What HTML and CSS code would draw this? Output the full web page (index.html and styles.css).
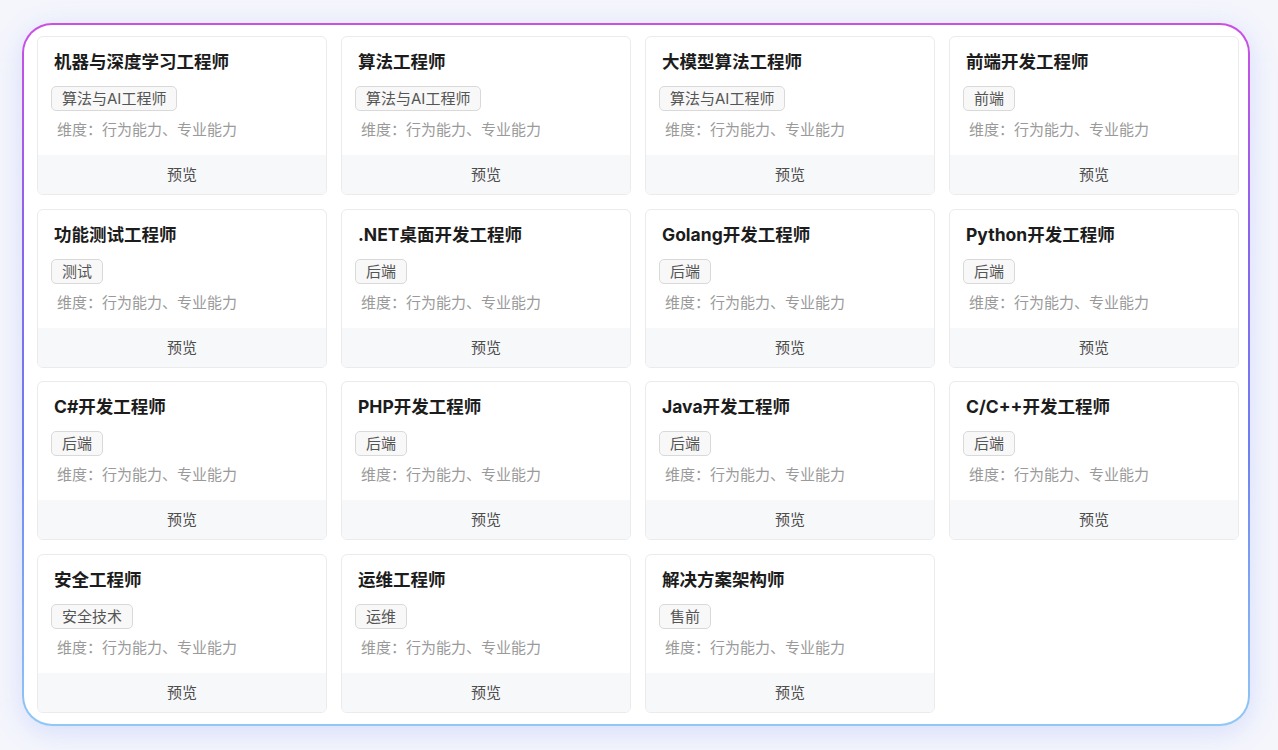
FILE: index.html
```html
<!DOCTYPE html>
<html lang="zh-CN">
<head>
  <meta charset="UTF-8">
  <title>岗位模板</title>
  <link rel="stylesheet" href="styles.css">
</head>
<body>
  <div class="panel">
    <div class="grid">
      <div class="card">
        <div class="card-body">
          <div class="card-title">机器与深度学习工程师</div>
          <span class="tag">算法与AI工程师</span>
          <div class="dims">维度：行为能力、专业能力</div>
        </div>
        <div class="card-foot">预览</div>
      </div>
      <div class="card">
        <div class="card-body">
          <div class="card-title">算法工程师</div>
          <span class="tag">算法与AI工程师</span>
          <div class="dims">维度：行为能力、专业能力</div>
        </div>
        <div class="card-foot">预览</div>
      </div>
      <div class="card">
        <div class="card-body">
          <div class="card-title">大模型算法工程师</div>
          <span class="tag">算法与AI工程师</span>
          <div class="dims">维度：行为能力、专业能力</div>
        </div>
        <div class="card-foot">预览</div>
      </div>
      <div class="card">
        <div class="card-body">
          <div class="card-title">前端开发工程师</div>
          <span class="tag">前端</span>
          <div class="dims">维度：行为能力、专业能力</div>
        </div>
        <div class="card-foot">预览</div>
      </div>

      <div class="card">
        <div class="card-body">
          <div class="card-title">功能测试工程师</div>
          <span class="tag">测试</span>
          <div class="dims">维度：行为能力、专业能力</div>
        </div>
        <div class="card-foot">预览</div>
      </div>
      <div class="card">
        <div class="card-body">
          <div class="card-title">.NET桌面开发工程师</div>
          <span class="tag">后端</span>
          <div class="dims">维度：行为能力、专业能力</div>
        </div>
        <div class="card-foot">预览</div>
      </div>
      <div class="card">
        <div class="card-body">
          <div class="card-title">Golang开发工程师</div>
          <span class="tag">后端</span>
          <div class="dims">维度：行为能力、专业能力</div>
        </div>
        <div class="card-foot">预览</div>
      </div>
      <div class="card">
        <div class="card-body">
          <div class="card-title">Python开发工程师</div>
          <span class="tag">后端</span>
          <div class="dims">维度：行为能力、专业能力</div>
        </div>
        <div class="card-foot">预览</div>
      </div>

      <div class="card">
        <div class="card-body">
          <div class="card-title">C#开发工程师</div>
          <span class="tag">后端</span>
          <div class="dims">维度：行为能力、专业能力</div>
        </div>
        <div class="card-foot">预览</div>
      </div>
      <div class="card">
        <div class="card-body">
          <div class="card-title">PHP开发工程师</div>
          <span class="tag">后端</span>
          <div class="dims">维度：行为能力、专业能力</div>
        </div>
        <div class="card-foot">预览</div>
      </div>
      <div class="card">
        <div class="card-body">
          <div class="card-title">Java开发工程师</div>
          <span class="tag">后端</span>
          <div class="dims">维度：行为能力、专业能力</div>
        </div>
        <div class="card-foot">预览</div>
      </div>
      <div class="card">
        <div class="card-body">
          <div class="card-title">C/C++开发工程师</div>
          <span class="tag">后端</span>
          <div class="dims">维度：行为能力、专业能力</div>
        </div>
        <div class="card-foot">预览</div>
      </div>

      <div class="card">
        <div class="card-body">
          <div class="card-title">安全工程师</div>
          <span class="tag">安全技术</span>
          <div class="dims">维度：行为能力、专业能力</div>
        </div>
        <div class="card-foot">预览</div>
      </div>
      <div class="card">
        <div class="card-body">
          <div class="card-title">运维工程师</div>
          <span class="tag">运维</span>
          <div class="dims">维度：行为能力、专业能力</div>
        </div>
        <div class="card-foot">预览</div>
      </div>
      <div class="card">
        <div class="card-body">
          <div class="card-title">解决方案架构师</div>
          <span class="tag">售前</span>
          <div class="dims">维度：行为能力、专业能力</div>
        </div>
        <div class="card-foot">预览</div>
      </div>
    </div>
  </div>
</body>
</html>
```

FILE: styles.css
```css
html, body {
  margin: 0;
  padding: 0;
  background: #f5f6fc;
  width: 100%;
  height: 100%;
  overflow: hidden;
}

body {
  padding: 23px 0 0 22px;
  box-sizing: border-box;
  font-family: "Inter", "Noto Sans CJK SC", sans-serif;
}

.panel {
  width: 1228px;
  height: 703px;
  box-sizing: border-box;
  padding: 11px 9px 12px 13px;
  border: 2px solid transparent;
  border-radius: 30px;
  background:
    linear-gradient(#ffffff, #ffffff) padding-box,
    linear-gradient(180deg, #cc4fe4 0%, #8a63ee 30%, #6d7ff2 60%, #90c8f6 100%) border-box;
  box-shadow: 0 6px 28px rgba(100, 130, 245, 0.22);
}

.grid {
  display: grid;
  grid-template-columns: repeat(4, 290px);
  column-gap: 14px;
  row-gap: 13.5px;
}

.card {
  border: 1px solid #ebebeb;
  border-radius: 6px;
  overflow: hidden;
  background: #fff;
}

.card-body {
  padding: 13px 16px 14px;
}

.card-title {
  font-size: 17.5px;
  line-height: 24px;
  font-weight: 700;
  color: #1c1c1c;
}

.tag {
  display: inline-block;
  margin-top: 12px;
  margin-left: -3px;
  padding: 0 10px;
  height: 23px;
  line-height: 23px;
  font-size: 15px;
  color: #555;
  background: #f8f8f8;
  border: 1px solid #d9d9d9;
  border-radius: 5px;
}

.dims {
  margin-top: 8px;
  margin-left: 3px;
  font-size: 15px;
  line-height: 22px;
  color: #9a9a9a;
}

.card-foot {
  height: 39px;
  line-height: 39px;
  text-align: center;
  font-size: 15px;
  color: #4d4d4d;
  background: #f7f8fa;
}
```
